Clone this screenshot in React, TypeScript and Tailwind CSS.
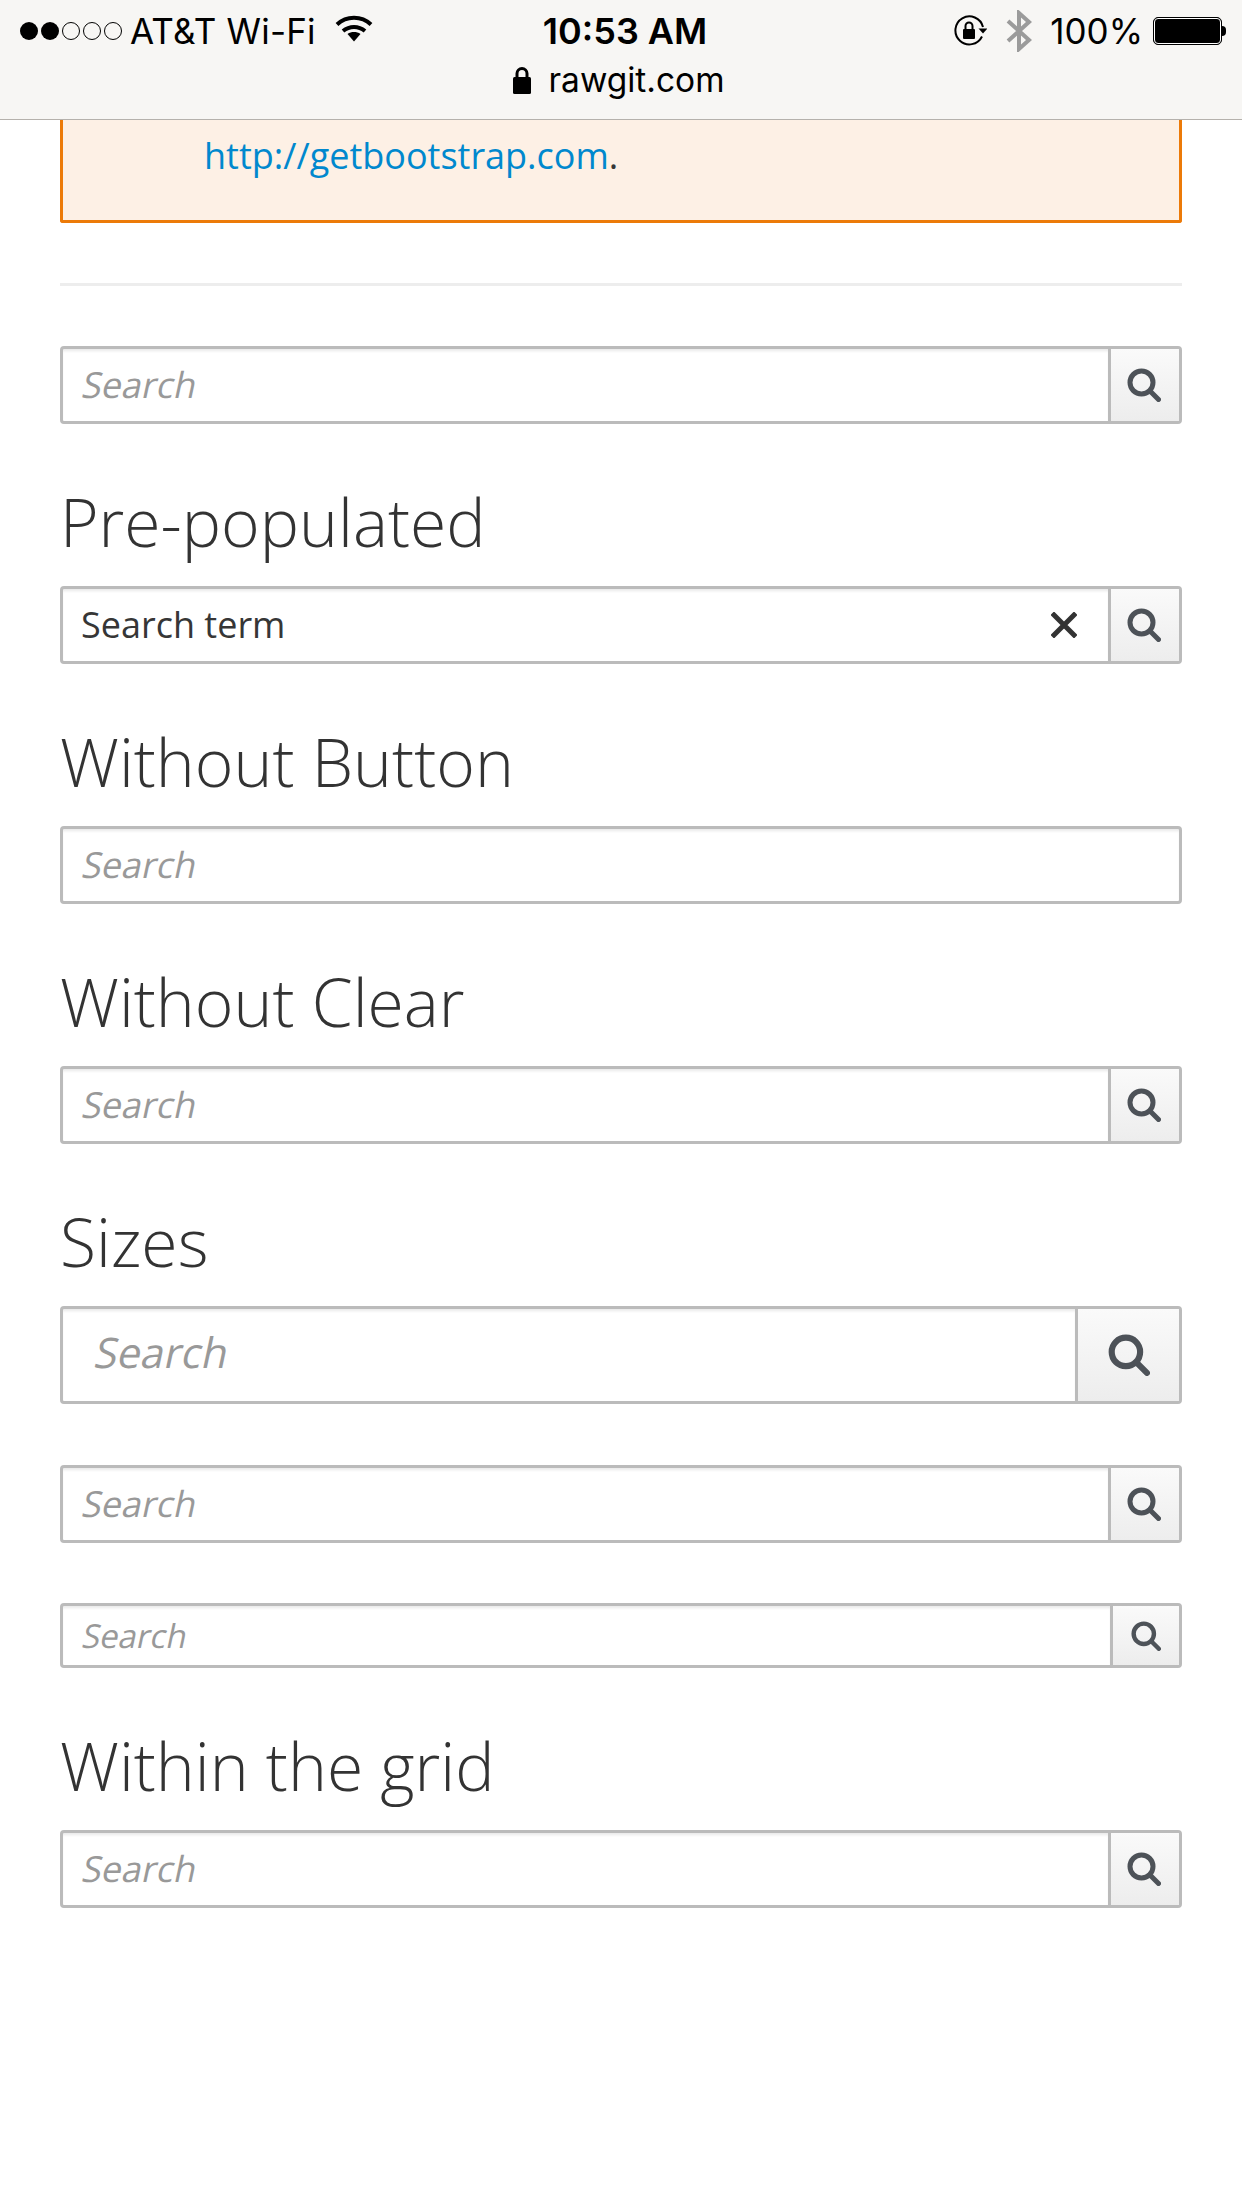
function SearchIcon({ size }: { size: number }) {
  return (
    <svg width={size} height={size} viewBox="0 0 34 34" fill="none" stroke="#4d5258" strokeLinecap="round">
      <circle cx="14.5" cy="14.5" r="11.5" strokeWidth="5" />
      <path d="M23 23l8.5 8.5" strokeWidth="5" />
    </svg>
  );
}

function ClearIcon() {
  return (
    <svg width="26" height="26" viewBox="0 0 26 26" fill="none" stroke="#333" strokeWidth="5" strokeLinecap="square">
      <path d="M3 3l20 20M23 3L3 23" />
    </svg>
  );
}

function WifiIcon() {
  return (
    <svg width="38" height="28" viewBox="0 0 38 28" fill="none" stroke="#000" strokeWidth="4">
      <path d="M2 10.5C11.5 1.5 26.5 1.500 36 10.500" />
      <path d="M8 17c6.500-5.500 15.500-5.500 22 0" />
      <path d="M19 27.500l-6.500-7.500c3.800-2.600 9.200-2.600 13 0z" fill="#000" stroke="none" />
    </svg>
  );
}

function LockIcon() {
  return (
    <svg width="18" height="28" viewBox="0 0 18 28" fill="none">
      <path d="M4 12V7.500a5 5 0 0 1 10 0V12" stroke="#000" strokeWidth="3" />
      <rect x="0" y="11" width="18" height="17" rx="1.500" fill="#000" />
    </svg>
  );
}

function RotationLockIcon() {
  return (
    <svg width="34" height="34" viewBox="0 0 34 34" fill="none">
      <path d="M29 22.500A14 14 0 1 1 30 13" stroke="#000" strokeWidth="2" />
      <path d="M25.500 14.500h9l-4.500 5z" fill="#000" />
      <path d="M12.500 15v-3a3.500 3.500 0 0 1 7 0v3" stroke="#000" strokeWidth="2" />
      <rect x="10" y="15" width="12" height="10" rx="1" fill="#000" />
    </svg>
  );
}

function BluetoothIcon() {
  return (
    <svg width="26" height="42" viewBox="0 0 26 42" fill="none" stroke="#9b9b9b" strokeWidth="4">
      <path d="M2 11l21 19-10 9V3l10 9L2 31" />
    </svg>
  );
}

function StatusBar() {
  return (
    <div className="h-[120px] shrink-0 border-b border-[#b5b1ac] bg-[#f7f6f4] font-['Inter',sans-serif] text-black">
      <div className="flex h-[62px] items-center pl-[20px] pr-[16px]">
        <div className="flex w-[106px] gap-[3px]">
          <span className="h-[18px] w-[18px] rounded-full bg-black" />
          <span className="h-[18px] w-[18px] rounded-full bg-black" />
          <span className="h-[18px] w-[18px] rounded-full border border-black" />
          <span className="h-[18px] w-[18px] rounded-full border border-black" />
          <span className="h-[18px] w-[18px] rounded-full border border-black" />
        </div>
        <span className="ml-[4px] text-[35px] leading-none tracking-[0.2px]">AT&amp;T Wi-Fi</span>
        <span className="ml-[19px] -mt-[6px]">
          <WifiIcon />
        </span>
        <span className="ml-[170px] text-[36px] font-semibold leading-none">10:53 AM</span>
        <span className="ml-auto">
          <RotationLockIcon />
        </span>
        <span className="ml-[19px]">
          <BluetoothIcon />
        </span>
        <span className="ml-[18px] text-[35px] leading-none">100%</span>
        <div className="ml-[10px] flex items-center">
          <div className="h-[28px] w-[69px] rounded-[5px] border border-black bg-black outline outline-1 outline-offset-[-2px] outline-white" />
          <div className="h-[10px] w-[4px] rounded-r-full bg-black" />
        </div>
      </div>
      <div className="flex items-center justify-center gap-[17px] pr-[4px]">
        <LockIcon />
        <span className="text-[33.5px] leading-[36px]">rawgit.com</span>
      </div>
    </div>
  );
}

type SearchBoxProps = {
  size?: "lg" | "md" | "sm";
  value?: string;
  button?: boolean;
};

function SearchBox({ size = "md", value, button = true }: SearchBoxProps) {
  const box = size === "lg" ? "h-[98px]" : size === "sm" ? "h-[65px]" : "h-[78px]";
  const field =
    size === "lg"
      ? "ml-[33px] mb-[8px] text-[42px]"
      : size === "sm"
        ? "ml-[20px] text-[33px]"
        : "ml-[20px] text-[36px]";
  const btn = size === "lg" ? "w-[104px]" : size === "sm" ? "w-[69px]" : "w-[71px] pr-[3px]";
  const icon = size === "lg" ? 42 : size === "sm" ? 30 : 34;

  return (
    <div className={`flex overflow-hidden rounded-[4px] border-[3px] border-[#bbb] ${box}`}>
      <div className="flex min-w-0 flex-1 items-center justify-between pr-[31px] shadow-[inset_0_3px_3px_-1px_rgba(0,0,0,0.09)]">
        {value ? (
          <span className="ml-[18px] text-[36px] text-[#363636]">{value}</span>
        ) : (
          <span className={`inline-block -skew-x-12 text-[#999] ${field}`}>Search</span>
        )}
        {value && <ClearIcon />}
      </div>
      {button && (
        <div className={`flex shrink-0 items-center justify-center border-l-[3px] border-[#bbb] bg-gradient-to-b from-[#fafafa] to-[#ededed] ${btn}`}>
          <SearchIcon size={icon} />
        </div>
      )}
    </div>
  );
}

function Heading({ children }: { children: string }) {
  return <h3 className="mb-[29px] mt-[61px] text-[66px] font-light leading-[72px] text-[#333]">{children}</h3>;
}

export default function App() {
  return (
    <div className="flex h-[2208px] flex-col overflow-hidden bg-white font-['Open_Sans',sans-serif]">
      <StatusBar />
      <div className="px-[60px]">
        <div className="flex h-[103px] items-start rounded-b-[3px] border-x-[3px] border-b-[3px] border-[#ec7a08] bg-[#fdf0e5] pl-[141px] pt-[11px] text-[36px] leading-[50px] text-[#363636]">
          <p>
            <a href="#" className="text-[#0088ce]">http://getbootstrap.com</a>.
          </p>
        </div>
        <hr className="mb-[60px] mt-[60px] border-t-[3px] border-[#ededed]" />

        <SearchBox />
        <Heading>Pre-populated</Heading>
        <SearchBox value="Search term" />
        <Heading>Without Button</Heading>
        <SearchBox button={false} />
        <Heading>Without Clear</Heading>
        <SearchBox />
        <Heading>Sizes</Heading>
        <SearchBox size="lg" />
        <div className="mt-[61px]">
          <SearchBox />
        </div>
        <div className="mt-[60px]">
          <SearchBox size="sm" />
        </div>
        <Heading>Within the grid</Heading>
        <SearchBox />
      </div>
    </div>
  );
}
